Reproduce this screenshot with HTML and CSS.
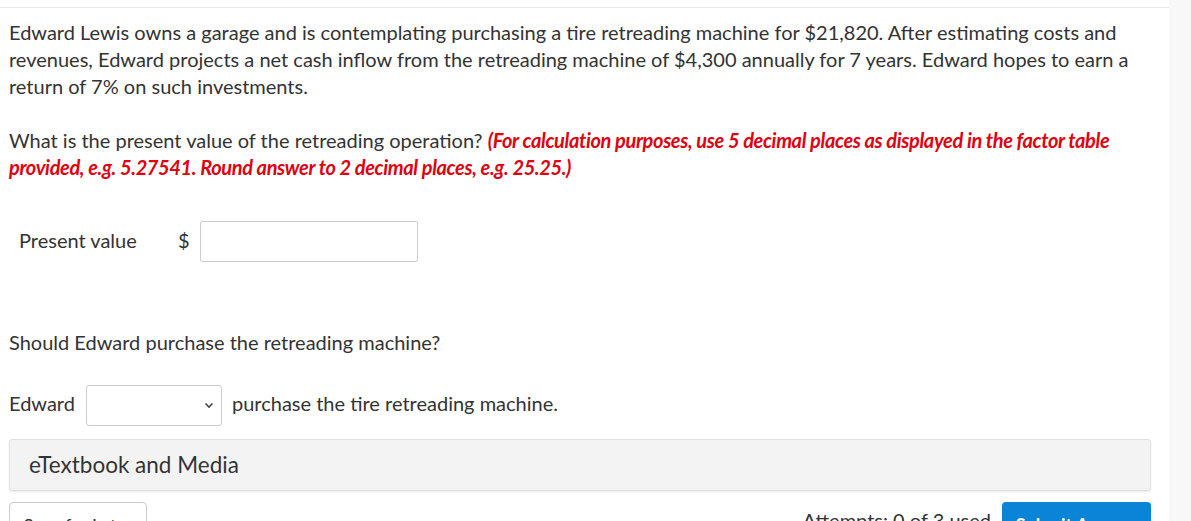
FILE: index.html
```html
<!DOCTYPE html>
<html lang="en">
  <head>
    <meta charset="UTF-8" />
    <title>Question</title>
    <link rel="stylesheet" href="styles.css">
  </head>
  <body>
    <div class="layout">
      <div class="main">
        <div class="question">
          <p>
            Edward Lewis owns a garage and is contemplating purchasing a tire retreading machine for $21,820. After estimating costs and
            revenues, Edward projects a net cash inflow from the retreading machine of $4,300 annually for 7 years. Edward hopes to earn a
            return of 7% on such investments.
          </p>
          <p>
            What is the present value of the retreading operation?
            <span class="hint">(For calculation purposes, use 5 decimal places as displayed in the factor table provided, e.g. 5.27541. Round answer to 2 decimal places, e.g. 25.25.)</span>
          </p>
        </div>

        <div class="answer-row">
          <span class="answer-label">Present value</span>
          <span class="currency">$</span>
          <input type="text" class="answer-input" />
        </div>

        <p class="sub-question">Should Edward purchase the retreading machine?</p>

        <div class="select-row">
          <span class="row-text">Edward</span>
          <div class="select-box">
            <svg width="10" height="7" viewBox="0 0 10 7"><path d="M1.5 1.5 L5 5 L8.5 1.5" fill="none" stroke="#444" stroke-width="1.6" /></svg>
          </div>
          <span class="row-text">purchase the tire retreading machine.</span>
        </div>

        <div class="media-box">eTextbook and Media</div>

        <div class="actions">
          <button class="btn-save">Save for Later</button>
          <div class="actions-right">
            <span class="attempts">Attempts: 0 of 3 used</span>
            <button class="btn-submit">Submit Answer</button>
          </div>
        </div>
      </div>
      <div class="gutter"></div>
    </div>
  </body>
</html>
```

FILE: styles.css
```css
body {
  margin: 0;
  font-family: Lato, "Open Sans", sans-serif;
  color: #333;
  background: white;
  overflow: hidden;
}
.layout {
  display: flex;
  height: 521px;
  overflow: hidden;
}
.main {
  width: 1169px;
  margin-top: 7px;
  border-top: 1px solid #e8e8e8;
  padding: 11px 18px 0 9px;
  box-sizing: border-box;
}
.gutter {
  flex: 1;
  background: #f8f8f8;
}
.question p {
  margin: 0 0 27px;
  font-size: 20px;
  line-height: 27px;
}
.hint {
  color: #e0000f;
  font-weight: bold;
  font-style: italic;
  letter-spacing: -0.37px;
}
.answer-row {
  display: flex;
  align-items: center;
  margin-top: 40px;
  padding-left: 10px;
  font-size: 20px;
}
.answer-label {
  width: 159px;
  margin-top: -3px;
}
.currency {
  width: 22px;
  margin-top: -4px;
}
.answer-input {
  width: 218px;
  height: 41px;
  box-sizing: border-box;
  border: 1px solid #ccc;
  border-radius: 2px;
  margin: 0;
}
.sub-question {
  margin: 67px 0 0;
  font-size: 20px;
  line-height: 27px;
}
.select-row {
  display: flex;
  align-items: center;
  margin-top: 29px;
  font-size: 20px;
}
.row-text {
  margin-top: -5px;
}
.select-row .select-box {
  width: 136px;
  height: 41px;
  box-sizing: border-box;
  border: 1px solid #ccc;
  border-radius: 3px;
  display: flex;
  align-items: center;
  justify-content: flex-end;
  padding-right: 7px;
  margin: 0 10px 0 11px;
}
.media-box {
  margin-top: 13px;
  height: 52px;
  box-sizing: border-box;
  background: #f3f3f3;
  border: 1px solid #e0e0e0;
  border-radius: 3px;
  box-shadow: 0 1px 2px rgba(0, 0, 0, 0.08);
  padding-left: 19px;
  font-size: 22.5px;
  line-height: 50px;
  color: #333;
}
.actions {
  display: flex;
  justify-content: space-between;
  margin-top: 11px;
}
.actions button {
  font-family: Lato, "Open Sans", sans-serif;
  font-size: 18px;
  height: 44px;
  padding: 2px 0 0;
  border-radius: 4px;
  vertical-align: top;
}
.btn-save {
  width: 138px;
  background: white;
  border: 1px solid #ccc;
  color: #333;
}
.actions-right {
  display: flex;
  gap: 11px;
}
.attempts {
  font-size: 20px;
  padding-top: 6px;
  color: #333;
}
.btn-submit {
  width: 149px;
  background: #0a84d6;
  border: none;
  color: white;
  font-weight: bold;
}
```
